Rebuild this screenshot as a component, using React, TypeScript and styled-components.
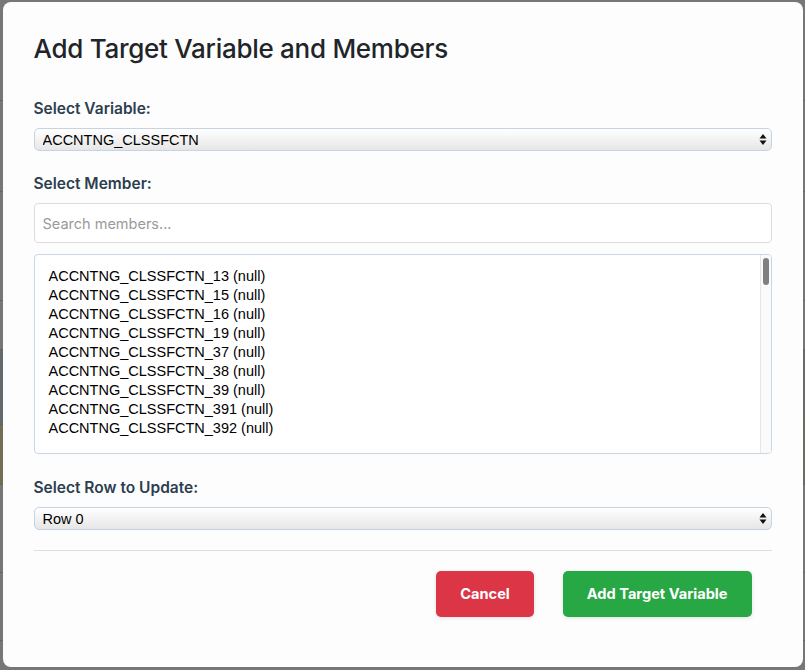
import React from "react";
import styled, { createGlobalStyle } from "styled-components";

const Global = createGlobalStyle`
  html, body { margin: 0; padding: 0; width: 805px; height: 670px; overflow: hidden; }
  body { font-family: Inter, "Noto Sans", sans-serif; background: #ffffff; }
  * { box-sizing: border-box; }
`;

/* ---------- background page (behind the dim overlay) ---------- */
const Page = styled.div`
  display: flex;
  flex-direction: column;
  width: 805px;
  height: 670px;
`;

const BgRow = styled.div<{ $h: number; $left?: string; $right?: string }>`
  display: flex;
  height: ${(p) => p.$h}px;
  border-bottom: 1px solid #d8d8d8;
  & > div:first-child { background: ${(p) => p.$left || "#ffffff"}; }
  & > div:last-child { background: ${(p) => p.$right || "#ffffff"}; }
`;

const BgCell = styled.div`
  flex: 1;
`;

/* ---------- modal ---------- */
const Overlay = styled.div`
  position: fixed;
  inset: 0;
  background: rgba(0, 0, 0, 0.535);
  display: flex;
  justify-content: center;
  align-items: flex-start;
  padding-top: 2px;
`;

const Modal = styled.div`
  width: 800px;
  height: 665px;
  background: #fdfdfd;
  border-radius: 8px;
  padding: 30px 31px 0 31px;
  display: flex;
  flex-direction: column;
`;

const Title = styled.h2`
  margin: 0 0 33px 0;
  font-size: 26px;
  line-height: 34px;
  font-weight: 500;
  letter-spacing: -0.28px;
  color: #212529;
`;

const Label = styled.label<{ $mt?: number }>`
  display: block;
  margin-top: ${(p) => p.$mt ?? 0}px;
  margin-bottom: 9px;
  font-size: 15.5px;
  line-height: 20px;
  font-weight: 600;
  color: #2c3e50;
`;

const SelectWrap = styled.div`
  position: relative;
  width: 100%;
`;

const NativeSelect = styled.select`
  appearance: none;
  -webkit-appearance: none;
  display: block;
  width: 100%;
  height: 23px;
  margin: 0;
  padding: 0 24px 0 8px;
  border: 1px solid #c5d3e3;
  border-radius: 5px;
  background: linear-gradient(#ffffff 0%, #f4f4f4 45%, #e6e6e6 100%);
  font-family: "Liberation Sans", Arial, sans-serif;
  font-size: 14.5px;
  color: #000000;
  outline: none;
`;

const Arrows = styled.svg`
  position: absolute;
  right: 5px;
  top: 6px;
  pointer-events: none;
`;

const SearchInput = styled.input`
  display: block;
  width: 100%;
  height: 40px;
  margin: 0;
  padding: 0 8px;
  border: 1px solid #dcdcdc;
  border-radius: 4px;
  background: #ffffff;
  font-family: Inter, "Noto Sans", sans-serif;
  font-size: 14.5px;
  color: #333;
  outline: none;
  &::placeholder { color: #9a9a9a; }
`;

const ListBox = styled.div`
  margin-top: 11px;
  height: 200px;
  border: 1px solid #c9d6e4;
  border-radius: 4px;
  background: #ffffff;
  display: flex;
  overflow: hidden;
`;

const ListViewport = styled.div`
  flex: 1;
  padding: 12px 0 0 14px;
`;

const ListItems = styled.div`
  font-family: "Liberation Sans", Arial, sans-serif;
  font-size: 14.5px;
  color: #000;
`;

const Option = styled.div`
  line-height: 19px;
  white-space: nowrap;
`;

const ScrollTrack = styled.div`
  width: 11px;
  flex: none;
  background: #fafafa;
  border-left: 1px solid #e6e6e6;
  padding: 3px 2px 0 2px;
`;

const ScrollThumb = styled.div`
  width: 6px;
  height: 27px;
  border-radius: 3px;
  background: #808080;
`;

const Divider = styled.hr`
  margin: 20px 0 0 0;
  border: 0;
  border-top: 1px solid #dedede;
  width: 100%;
`;

const Footer = styled.div`
  display: flex;
  justify-content: flex-end;
  gap: 29px;
  padding: 20px 20px 0 0;
`;

const Button = styled.button<{ $bg: string }>`
  height: 46px;
  padding: 0 24px;
  border: 0;
  border-radius: 5px;
  background: ${(p) => p.$bg};
  color: #ffffff;
  font-family: Inter, "Noto Sans", sans-serif;
  font-size: 14.6px;
  font-weight: 700;
  box-shadow: 0 1px 4px rgba(0, 0, 0, 0.12);
  cursor: pointer;
`;

const suffixes = ["13", "15", "16", "19", "37", "38", "39", "391", "392"];

const UpDown = () => (
  <Arrows width="8" height="11" viewBox="0 0 8 11">
    <path d="M4 0 L7.5 4.5 L0.5 4.5 Z" fill="#111" />
    <path d="M4 11 L7.5 6.5 L0.5 6.5 Z" fill="#111" />
  </Arrows>
);

export default function App() {
  return (
    <>
      <Global />
      <Page>
        <BgRow $h={101}><BgCell /><BgCell /></BgRow>
        <BgRow $h={91}><BgCell /><BgCell /></BgRow>
        <BgRow $h={109}><BgCell /><BgCell /></BgRow>
        <BgRow $h={49}><BgCell /><BgCell /></BgRow>
        <BgRow $h={75} $left="#d6e0ec" $right="#e9e2dc"><BgCell /><BgCell /></BgRow>
        <BgRow $h={60} $left="#f4ecb4" $right="#e4ecc4"><BgCell /><BgCell /></BgRow>
        <BgRow $h={88}><BgCell /><BgCell /></BgRow>
        <BgRow $h={68}><BgCell /><BgCell /></BgRow>
      </Page>
      <Overlay>
        <Modal>
          <Title>Add Target Variable and Members</Title>

          <Label>Select Variable:</Label>
          <SelectWrap>
            <NativeSelect defaultValue="ACCNTNG_CLSSFCTN">
              <option>ACCNTNG_CLSSFCTN</option>
            </NativeSelect>
            <UpDown />
          </SelectWrap>

          <Label $mt={23}>Select Member:</Label>
          <SearchInput placeholder="Search members..." />

          <ListBox>
            <ListViewport>
              <ListItems>
                {suffixes.map((s) => (
                  <Option key={s}>ACCNTNG_CLSSFCTN_{s} (null)</Option>
                ))}
              </ListItems>
            </ListViewport>
            <ScrollTrack>
              <ScrollThumb />
            </ScrollTrack>
          </ListBox>

          <Label $mt={24}>Select Row to Update:</Label>
          <SelectWrap>
            <NativeSelect defaultValue="Row 0">
              <option>Row 0</option>
            </NativeSelect>
            <UpDown />
          </SelectWrap>

          <Divider />
          <Footer>
            <Button $bg="#dc3545">Cancel</Button>
            <Button $bg="#28a745">Add Target Variable</Button>
          </Footer>
        </Modal>
      </Overlay>
    </>
  );
}
